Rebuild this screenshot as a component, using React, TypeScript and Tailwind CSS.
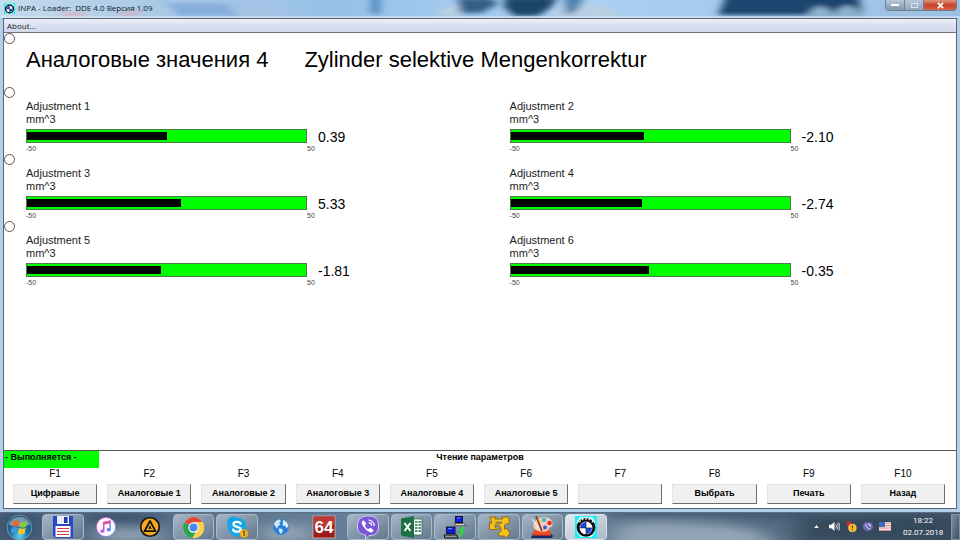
import React, { useState } from 'react';

interface Gauge {
    id: number;
    value: number;
    fill: number;
}

const MIN = -50;
const MAX = 50;

const rows: Gauge[][] = [
    [{ id: 1, value: 0.39, fill: 50.2 }, { id: 2, value: -2.1, fill: 47.7 }],
    [{ id: 3, value: 5.33, fill: 55.2 }, { id: 4, value: -2.74, fill: 47.1 }],
    [{ id: 5, value: -1.81, fill: 48 }, { id: 6, value: -0.35, fill: 49.5 }],
];

const functionKeys = [
    { key: 'F1', label: 'Цифравые' },
    { key: 'F2', label: 'Аналоговые 1' },
    { key: 'F3', label: 'Аналоговые 2' },
    { key: 'F4', label: 'Аналоговые 3' },
    { key: 'F5', label: 'Аналоговые 4' },
    { key: 'F6', label: 'Аналоговые 5' },
    { key: 'F7', label: '' },
    { key: 'F8', label: 'Выбрать' },
    { key: 'F9', label: 'Печать' },
    { key: 'F10', label: 'Назад' },
];

const BmwIcon = ({ className }: { className: string }) => (
    <svg viewBox="0 0 24 24" className={className} aria-hidden="true">
        <rect width="24" height="24" fill="#19f0f5" />
        <path d="M5 1h14l3 5v12l-4 5H6l-4-5V6z" fill="#fff" opacity=".75" />
        <circle cx="12" cy="12.5" r="10.2" fill="#0c0c10" />
        <path d="M5 7l1-2M8 4.600l1-2M12 4.400V2M15 4.600l1-2M18.500 7l1-2" stroke="#fff" strokeWidth="1.300" />
        <circle cx="12" cy="13" r="7" fill="#fff" />
        <path d="M12 13V6.500A6.500 6.500 0 0 0 5.500 13zM12 13v6.500a6.500 6.500 0 0 0 6.500-6.500z" fill="#1848e0" />
        <path d="M12 6v14M5 13h14" stroke="#0c0c10" strokeWidth=".6" />
    </svg>
);

const StartOrb = () => (
    <svg viewBox="0 0 28 28" className="size-[27px]" aria-hidden="true">
        <defs>
            <radialGradient id="orb" cx=".5" cy=".85" r=".8">
                <stop offset="0" stopColor="#5fd6f5" />
                <stop offset=".45" stopColor="#1d6ea8" />
                <stop offset="1" stopColor="#24506f" />
            </radialGradient>
        </defs>
        <circle cx="14" cy="14" r="12.800" fill="url(#orb)" stroke="#8fb4c9" strokeWidth=".7" />
        <path d="M3 11a11.500 11.500 0 0 1 22 0c-5 2.500-17 3-22 0z" fill="#d5e8f1" opacity=".45" />
        <path d="M7.200 7.500c2.400-1.200 4.200-1.200 6.500-.1l-1 5.800c-2.200-1-4.400-1-6.500 0z" fill="#ea6532" />
        <path d="M14.700 7.700c2.300 1 4.400 1 7.200 0l-1.200 5.800c-2.400 1-4.600 1-7 0z" fill="#8dc63f" />
        <path d="M6 14.300c2.200-1 4.400-1 6.500 0l-1.100 5.600c-2.200-1-4.400-1-6.500 0z" fill="#3c9be0" />
        <path d="M13.400 14.600c2.400 1 4.600 1 7 0l-1.200 5.600c-2.300 1-4.500 1-6.900 0z" fill="#fbc82c" />
    </svg>
);

const FloppyIcon = () => (
    <svg viewBox="0 0 24 24" className="size-6">
        <path d="M2 1h20v22H4l-2-2z" fill="#2947c8" />
        <rect x="6" y="1" width="12" height="8" fill="#e8edf8" />
        <rect x="13" y="2" width="3.500" height="6" fill="#2038a0" />
        <rect x="4.500" y="11" width="15" height="11" fill="#fff" />
        <path d="M6 13.500h12M6 16.500h12M6 19.500h12" stroke="#d23c46" strokeWidth="1.100" />
    </svg>
);

const ItunesIcon = () => (
    <svg viewBox="0 0 24 24" className="size-[22px]">
        <defs>
            <linearGradient id="itunes" x1="0" y1="0" x2="1" y2="1">
                <stop offset="0" stopColor="#f2549b" />
                <stop offset=".5" stopColor="#b45be0" />
                <stop offset="1" stopColor="#38b6f0" />
            </linearGradient>
        </defs>
        <circle cx="12" cy="12" r="10.500" fill="#fbf9fd" stroke="url(#itunes)" strokeWidth="1" />
        <path d="M9.500 16V7.300l7-1.500v8.700" fill="none" stroke="url(#itunes)" strokeWidth="1.700" />
        <path d="M9 6.500l8-1.700v3L9 9.500z" fill="#e0549b" />
        <ellipse cx="8" cy="16.500" rx="2.200" ry="1.800" fill="#b45be0" />
        <ellipse cx="15" cy="15" rx="2.200" ry="1.800" fill="#5a80e8" />
    </svg>
);

const AimpIcon = () => (
    <svg viewBox="0 0 24 24" className="size-[22px]">
        <circle cx="12" cy="12" r="11" fill="#14120f" />
        <circle cx="12" cy="12" r="9.200" fill="#f7a823" />
        <path d="M12 5.500l6 11H6z" fill="#f7a823" stroke="#14120f" strokeWidth="2" strokeLinejoin="round" />
        <path d="M10 14l2-4 2 4z" fill="#14120f" />
    </svg>
);

const ChromeIcon = () => (
    <svg viewBox="0 0 24 24" className="size-[23px]">
        <circle cx="12" cy="12" r="11" fill="#fff" />
        <path d="M12 12L2.500 6.500A11 11 0 0 1 21.500 6.500H12z" fill="#df4a3c" />
        <path d="M2.500 6.500A11 11 0 0 0 11 23l5-8.500L12 12z" fill="#2ba24c" />
        <path d="M21.500 6.500A11 11 0 0 1 11 23l5.500-9L12 6.500z" fill="#fcd04b" />
        <circle cx="12" cy="12" r="5.400" fill="#fff" />
        <circle cx="12" cy="12" r="4.200" fill="#4587f2" />
    </svg>
);

const SkypeIcon = () => (
    <svg viewBox="0 0 24 24" className="size-6">
        <path d="M7 1.500a6 6 0 0 1 4 1.200A9.600 9.600 0 0 1 21.300 14 6 6 0 0 1 13 21.300 9.600 9.600 0 0 1 2.700 10 6 6 0 0 1 7 1.500z" fill="#12a5e8" />
        <path d="M15.500 8.500C15 6.500 8.500 6 8.500 9.200c0 3.300 7.300 2 7.300 5.200 0 3-7 2.800-7.600.3" fill="none" stroke="#fff" strokeWidth="2.400" strokeLinecap="round" />
        <circle cx="19" cy="18.500" r="4" fill="#f8b41c" stroke="#e79412" strokeWidth=".5" />
        <path d="M18 17l1.200-.8v4.800" fill="none" stroke="#333" strokeWidth="1" />
    </svg>
);

const GlobeIcon = () => (
    <svg viewBox="0 0 24 24" className="size-[18px]">
        <circle cx="12" cy="12" r="10.500" fill="#2a7fd8" />
        <path d="M2.500 8c1.500-3.500 5-6 8-6l1.500 2.500-2.500 1.500L11 9l-3 1.500-1 3-2.500-2zM14.500 2.500c4 1 6.500 4 7.500 7.500l-2.500 4-2-3.500-3.500-.5.500-3zM9 13.500l4.500 1 1 2.500-2.500 4.500-2.500-3.500z" fill="#cfeafa" />
    </svg>
);

const Aida64Icon = () => (
    <svg viewBox="0 0 24 24" className="size-6">
        <rect x="1" y="1" width="22" height="22" fill="#9c1a1a" stroke="#d9b3ae" strokeWidth=".8" />
        <path d="M1.500 1.500h21v8c-7 3-14 3-21 1z" fill="#c9463f" opacity=".7" />
        <text x="12" y="18" textAnchor="middle" fontSize="17" fontWeight="700" fill="#fff" fontFamily="Liberation Sans, sans-serif">64</text>
    </svg>
);

const ViberIcon = () => (
    <svg viewBox="0 0 24 24" className="size-6">
        <path d="M12 1c7 0 10.500 2.500 10.500 10S19 20.500 13 20.500L9.500 24v-4C4 19 1.500 17 1.500 11S5 1 12 1z" fill="#7b57d6" stroke="#d6cbf5" strokeWidth="1" />
        <path d="M7 5.500c-2 1-1.500 3 0 5.500s4 5 6.500 6 3.300 0 3.800-1.300c.3-1-2.300-2.700-3.300-2.700s-1 1.300-2 1c-1.500-.6-2.700-2.200-3-3.500 0-.8 1.200-1 1-2S8 5.300 7 5.500z" fill="#fff" />
        <path d="M12.500 5a6 6 0 0 1 5.800 6M12.800 7.600a3.400 3.400 0 0 1 3 3.100" fill="none" stroke="#fff" strokeWidth="1.100" />
    </svg>
);

const ExcelIcon = () => (
    <svg viewBox="0 0 24 24" className="size-6">
        <rect x="12" y="4" width="10" height="16" fill="#fff" stroke="#1d7044" strokeWidth=".8" />
        <path d="M15 7h2.500M15 10h2.500M15 13h2.500M15 16h2.500M18.500 7H21M18.500 10H21M18.500 13H21M18.500 16H21" stroke="#1d7044" strokeWidth="1.600" />
        <path d="M1 3.500L14 1v22L1 20.500z" fill="#1d7044" />
        <path d="M4.500 8l6 8M10.500 8l-6 8" stroke="#fff" strokeWidth="2" />
    </svg>
);

const NetworkIcon = () => (
    <svg viewBox="0 0 24 24" className="size-6">
        <rect x="12.500" y="1.500" width="7" height="6" fill="#0a1fe0" stroke="#10143c" strokeWidth="1" />
        <path d="M14 3h3" stroke="#7f97ff" strokeWidth="1" />
        <path d="M11.500 8.500h9l3 2.200h-11z" fill="#d8d6c4" stroke="#333" strokeWidth=".7" />
        <rect x="3.500" y="12" width="8.500" height="6.500" fill="#0a1fe0" stroke="#10143c" strokeWidth="1" />
        <path d="M5 13.700h4" stroke="#7f97ff" strokeWidth="1" />
        <path d="M1 20h12.500l1.500 3H2z" fill="#8f93a0" stroke="#111" strokeWidth="1" />
        <path d="M21 12l-3.500 3 2.500 1.500-4 5.500" fill="none" stroke="#22e52a" strokeWidth="2" />
    </svg>
);

const ArrowsIcon = () => (
    <svg viewBox="0 0 24 24" className="size-6">
        <path
            d="M2.500 2h7l-1.700 2h8L14.500 2H22v8l-2.500-1.700L17.500 10v4.500l2-1.500 3.500 5-3.500 5-2-2h-5l-1.500-3 3-1.500V13L12 10H8v2l2 2.500H2.500V7l2 1.500v-3z"
            fill="#f5c21b"
            stroke="#8d6707"
            strokeWidth=".9"
            strokeLinejoin="round"
        />
        <path d="M8.500 6.500h6.500V9H8.500z" fill="#94854d" />
        <path d="M9 12.500h3v2H9z" fill="#b98c12" />
    </svg>
);

const PaletteIcon = () => (
    <svg viewBox="0 0 24 24" className="size-6">
        <path d="M3 18l4-3h11l5 6-1.500 2H1z" fill="#1d2565" />
        <path d="M4.500 15h15l2 5.500H2z" fill="#f0471f" />
        <path d="M12 2.500c7-1 11 3 10.500 7-.4 3-3 2-3.500 4s-3 4-8 3C5 16 2 12 4 8c1-3 4-5 8-5.500z" fill="#f3cdb8" />
        <circle cx="14" cy="5" r="2.100" fill="#2fb5ec" />
        <circle cx="19.500" cy="8" r="2.300" fill="#e42b24" />
        <circle cx="9.500" cy="6" r="1.700" fill="#f5cf27" />
        <circle cx="15" cy="12.500" r="2" fill="#315ce0" />
        <path d="M6 1l6 15" stroke="#8f3c30" strokeWidth="1.800" />
        <path d="M2 4l7 10" stroke="#e8eaf2" strokeWidth="1.300" />
    </svg>
);

const taskbarItems = [
    { name: 'Total Commander', icon: <FloppyIcon />, state: 'open' },
    { name: 'iTunes', icon: <ItunesIcon />, state: 'pinned' },
    { name: 'AIMP', icon: <AimpIcon />, state: 'pinned' },
    { name: 'Chrome', icon: <ChromeIcon />, state: 'open' },
    { name: 'Skype', icon: <SkypeIcon />, state: 'open' },
    { name: 'Globe', icon: <GlobeIcon />, state: 'pinned' },
    { name: 'AIDA64', icon: <Aida64Icon />, state: 'pinned' },
    { name: 'Viber', icon: <ViberIcon />, state: 'open' },
    { name: 'Excel', icon: <ExcelIcon />, state: 'open' },
    { name: 'Network', icon: <NetworkIcon />, state: 'open' },
    { name: 'Ediabas', icon: <ArrowsIcon />, state: 'open' },
    { name: 'Paint', icon: <PaletteIcon />, state: 'open' },
    { name: 'INPA', icon: <BmwIcon className="size-[22px]" />, state: 'active' },
];

const itemStyles: Record<string, string> = {
    open: 'border border-[#a9b9c8] bg-linear-to-br from-[#a5b6c6] to-[#63788e]',
    pinned: 'border border-transparent',
    active: 'border border-[#d8e2ea] bg-linear-to-br from-[#e3eaf0] to-[#a9b9c6]',
};

// blurred desktop that shows through the glass title bar
const GlassBackdrop = () => (
    <svg viewBox="0 0 960 18" preserveAspectRatio="none" className="absolute inset-0 h-full w-full" aria-hidden="true">
        <defs>
            <filter id="glass" x="-5%" y="-20%" width="110%" height="140%">
                <feGaussianBlur stdDeviation="4 2" />
            </filter>
            <linearGradient id="sky">
                <stop offset="0" stopColor="#c5dbee" />
                <stop offset=".16" stopColor="#a9c9e6" />
                <stop offset=".35" stopColor="#98c1e8" />
                <stop offset=".6" stopColor="#acd0f2" />
                <stop offset="1" stopColor="#9dbfe2" />
            </linearGradient>
        </defs>
        <rect width="960" height="18" fill="url(#sky)" />
        <g filter="url(#glass)">
            <path d="M165 3h115l12 13H180z" fill="#86aedb" />
            <path d="M225 2h60l8 14h-55z" fill="#a3c3e4" />
            <path d="M371-3h9v17h-9z" fill="#4f88be" />
            <path d="M440 10l20-6v12h-25zM560 6h45l20 12h-70z" fill="#b9cfe2" />
            <path d="M458-2h34l6 6-16 9h-22z" fill="#355f88" />
            <path d="M505-3h52l-5 10-14 9h-24l-10-9z" fill="#1f4568" />
            <path d="M565-4h20l-8 15-12 4z" fill="#4f80aa" />
            <path d="M728-8h130l4 23H718z" fill="#1f4470" />
            <path d="M808 20c0-16 18-18 26-5 8-14 24-12 28 5z" fill="#8db2ce" />
            <path d="M62 13h24v3H62zM118 12h22v3h-22z" fill="#e4a9b2" />
        </g>
        <path d="M0 16h960v2H0z" fill="#dbe9f6" opacity=".6" />
    </svg>
);

const TitleBar = () => (
    <header className="relative flex h-[18px] shrink-0 items-start justify-between overflow-hidden">
        <GlassBackdrop />
        <div className="relative flex items-center gap-[3px] pl-1">
            <BmwIcon className="mt-0.5 size-[11px]" />
            <h1 className="font-['Open_Sans','Noto_Sans',sans-serif] text-[8px] leading-[15px] whitespace-pre text-[#0d1a28]">INPA - Loader:  DDE 4.0 Версия 1.09</h1>
        </div>
        <div className="relative mr-[3px] flex h-[11px] overflow-hidden rounded-b border border-t-0 border-[#6b8095]">
            <button type="button" aria-label="Minimize" className="flex w-[19px] items-center justify-center border-r border-[#6b8095] bg-linear-to-b from-[#b9c9da] to-[#8396aa]">
                <span className="h-[2px] w-2 bg-white" />
            </button>
            <button type="button" aria-label="Restore" className="flex w-[19px] items-center justify-center border-r border-[#6b8095] bg-linear-to-b from-[#b5c7da] to-[#93a7bb]">
                <span className="h-[5px] w-[7px] border border-[#d9e3ec]" />
            </button>
            <button type="button" aria-label="Close" className="flex w-8 items-center justify-center bg-linear-to-b from-[#e0937f] via-[#c64028] to-[#d9614a]">
                <svg viewBox="0 0 8 8" className="size-[7px]">
                    <path d="M1 1l6 6M7 1L1 7" stroke="#fff" strokeWidth="2" />
                </svg>
            </button>
        </div>
    </header>
);

const GaugeView = ({ gauge }: { gauge: Gauge }) => (
    <div className="pt-[13px] text-[#1c1c1c]">
        <p className="text-[11px] leading-[13px]">Adjustment {gauge.id}</p>
        <p className="text-[11px] leading-[13px]">mm^3</p>
        <div className="mt-[3px] flex items-center gap-[11px]">
            <div className="h-[14px] w-[281px] border border-[#4b7a4b] bg-[#00ff00] pt-[2px]">
                <div className="h-2 bg-black" style={{ width: `${gauge.fill}%` }} />
            </div>
            <p className="h-[14px] text-[14px] leading-[16px] text-black">{gauge.value.toFixed(2)}</p>
        </div>
        <div className="flex text-[7px] leading-[12px] text-[#444]">
            <span className="w-[281px]">{MIN}</span>
            <span>{MAX}</span>
        </div>
    </div>
);

const LineMarker = ({ line, selected, onSelect }: { line: number; selected: boolean; onSelect: (line: number) => void }) => (
    <input
        type="radio"
        name="line"
        aria-label={`Line ${line}`}
        checked={selected}
        onChange={() => onSelect(line)}
        className="size-[11px] shrink-0 appearance-none rounded-full border border-[#555] bg-white checked:bg-black"
    />
);

const Tray = () => (
    <div className="flex items-center text-white">
        <button type="button" aria-label="Show hidden icons" className="mr-2.5">
            <svg viewBox="0 0 6 4" className="h-[3px] w-[5px]">
                <path d="M0 4l3-4 3 4z" fill="#fff" />
            </svg>
        </button>
        <div className="flex items-center gap-[6px]">
            <svg viewBox="0 0 12 12" className="size-[11px]">
                <path d="M0 4h2.500L6 1v10L2.500 8H0z" fill="#fff" />
                <path d="M7.500 4q1.200 2 0 4M9 2.800q2.200 3.200 0 6.400M10.500 1.500q3 4.500 0 9" fill="none" stroke="#fff" strokeWidth=".8" />
            </svg>
            <svg viewBox="0 0 12 12" className="size-[11px]">
                <path d="M0 0l3 1 3-1-1 3 1 3H2z" fill="#e02a1d" />
                <circle cx="7" cy="7.500" r="4.300" fill="#fbb81f" stroke="#fde08b" strokeWidth=".5" />
                <path d="M7 5v3M7 9v1" stroke="#333" strokeWidth="1.100" />
            </svg>
            <svg viewBox="0 0 12 12" className="size-[10px]">
                <path d="M6 0c4 0 6 1.500 6 5.300S9 10.500 7 10.500L5 12v-1.500C2 10.300 0 9 0 5.300S2 0 6 0z" fill="#7064b8" />
                <path d="M3.500 2.500c-1 2 3 6.500 5 5.800M6.200 2.500a3 3 0 0 1 2.800 3" fill="none" stroke="#fff" strokeWidth="1.200" />
            </svg>
            <svg viewBox="0 0 12 9" className="h-[9px] w-3">
                <rect width="12" height="9" fill="#f3e6e6" />
                <path d="M0 1h12M0 3.500h12M0 6h12M0 8.500h12" stroke="#dd8a8d" strokeWidth="1" />
                <rect width="6" height="5" fill="#3f6cbb" />
            </svg>
        </div>
        <div className="ml-3 w-10 text-center font-[Roboto,sans-serif] text-[8px] leading-[12px]">
            <p>18:22</p>
            <p>02.07.2018</p>
        </div>
        <button type="button" aria-label="Show desktop" className="ml-2 h-[26px] w-[9px] border border-[#8296a8] bg-linear-to-br from-[#7d90a3] to-[#3c5065]" />
    </div>
);

const Taskbar = () => (
    <footer className="relative flex h-7 shrink-0 items-stretch justify-between overflow-hidden border-t border-[#5b7086] bg-linear-to-r from-[#4d647d] via-[#6f88a1] to-[#42576c]">
        <svg viewBox="0 0 960 28" preserveAspectRatio="none" className="absolute inset-0 h-full w-full" aria-hidden="true">
            <defs>
                <filter id="soft">
                    <feGaussianBlur stdDeviation="12 5" />
                </filter>
            </defs>
            <g filter="url(#soft)">
                <path d="M0 0h40v28H0zM88 0h70v10H88z" fill="#37506b" />
                <path d="M100 16h60v14h-60zM262 12h50v18h-50z" fill="#8fa2b3" />
                <path d="M620 12l40-3 60 3 40 6 20 20H610z" fill="#92a5b6" />
                <path d="M610-4h200v8H610z" fill="#3a5570" />
                <path d="M800 2h160v28H800z" fill="#36495c" />
            </g>
        </svg>
        <nav className="relative flex w-[63.200%] items-stretch pt-px">
            <button type="button" aria-label="Start" className="mr-1 flex w-[38px] shrink-0 items-center justify-center">
                <StartOrb />
            </button>
            <div className="flex flex-1 gap-0.5">
                {taskbarItems.map(item => (
                    <button key={item.name} type="button" aria-label={item.name} className={`flex flex-1 items-center justify-center rounded-sm ${itemStyles[item.state]}`}>
                        {item.icon}
                    </button>
                ))}
            </div>
        </nav>
        <div className="relative flex">
            <Tray />
        </div>
    </footer>
);

export default function App() {
    const [line, setLine] = useState<number | null>(null);

    return (
        <div className="flex h-screen min-h-[480px] flex-col bg-[#b4cfea] font-['Liberation_Sans',Arial,sans-serif]">
            <TitleBar />
            <div className="mx-[3px] mb-[3px] flex flex-1 flex-col border border-[#5c6670] bg-white">
                <nav className="flex h-[14px] items-center border-b border-[#6f7680] bg-linear-to-b from-[#eef1f9] via-[#dadff0] to-[#d3d9ec] pl-[3px]">
                    <button type="button" className="font-['Open_Sans','Noto_Sans',sans-serif] text-[8px] leading-[12px] text-[#1b1b1b]">About...</button>
                </nav>

                <main className="flex-1">
                    <div className="flex h-[54px]">
                        <LineMarker line={1} selected={line === 1} onSelect={setLine} />
                        <h2 className="ml-[11px] pt-[12px] text-[22px] leading-[30px] text-black">
                            <span className="mr-9">Аналоговые значения 4</span>
                            <span>Zylinder selektive Mengenkorrektur</span>
                        </h2>
                    </div>
                    {rows.map((row, i) => (
                        <div key={i} className="flex h-[67px]">
                            <LineMarker line={i + 2} selected={line === i + 2} onSelect={setLine} />
                            <div className="ml-[11px] grid flex-1 grid-cols-[52%_1fr]">
                                {row.map(gauge => (
                                    <GaugeView key={gauge.id} gauge={gauge} />
                                ))}
                            </div>
                        </div>
                    ))}
                </main>

                <section className="border-t border-[#555] pb-1 text-[9px] text-black">
                    <div className="grid h-[17px] grid-cols-[1fr_8fr_1fr] font-bold">
                        <p className="bg-[#00ff00] pl-px leading-[13px] whitespace-nowrap">- Выполняется -</p>
                        <p className="text-center leading-[13px]">Чтение параметров</p>
                    </div>
                    <div className="flex pr-1.5 pl-1">
                        {functionKeys.map(({ key, label }) => (
                            <div key={key} className="flex flex-1 flex-col items-stretch px-[5px]">
                                <label htmlFor={key} className="pb-[4px] text-center text-[10px] leading-[12px]">{key}</label>
                                <button
                                    id={key}
                                    type="button"
                                    className="h-5 border border-t-[#e3e3e3] border-r-[#6d6d6d] border-b-[#6d6d6d] border-l-[#e3e3e3] bg-[#f0f0f0] font-bold whitespace-nowrap"
                                >
                                    {label}
                                </button>
                            </div>
                        ))}
                    </div>
                </section>
            </div>
            <Taskbar />
        </div>
    );
}
